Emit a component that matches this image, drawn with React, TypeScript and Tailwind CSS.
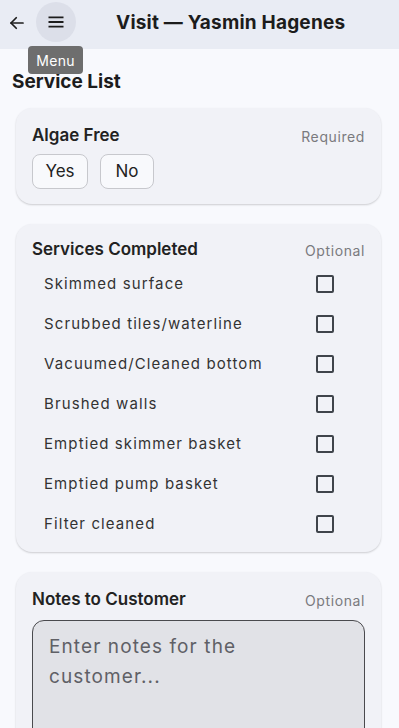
import React from "react";

const items = [
  "Skimmed surface",
  "Scrubbed tiles/waterline",
  "Vacuumed/Cleaned bottom",
  "Brushed walls",
  "Emptied skimmer basket",
  "Emptied pump basket",
  "Filter cleaned",
];

export default function App() {
  return (
    <div
      className="w-[399px] h-[728px] overflow-hidden bg-[#f8f9fd] text-[#1f1f1f]"
      style={{ fontFamily: "Inter, 'Noto Sans', sans-serif" }}
    >
      <header className="relative h-[49px] bg-[#e9ecf4] flex items-center">
        <button className="ml-[7px] w-[20px] h-[40px] flex items-center justify-center mt-[-4px]">
          <svg width="18" height="18" viewBox="0 0 24 24" fill="none" stroke="#1c1c1c" strokeWidth="2.3" strokeLinecap="round" strokeLinejoin="round">
            <path d="M20 12H4" />
            <path d="M11 5l-7 7 7 7" />
          </svg>
        </button>
        <button className="ml-[9px] w-[40px] h-[40px] rounded-full bg-[#dcdfe9] flex items-center justify-center mt-[-5px]">
          <svg width="20" height="20" viewBox="0 0 24 24" fill="none" stroke="#1c1c1c" strokeWidth="2.2" strokeLinecap="butt">
            <path d="M3 6.5h18M3 12h18M3 17.5h18" />
          </svg>
        </button>
        <h1 className="ml-[40px] text-[19px] font-bold tracking-[0.2px] mt-[-3px] text-[#1c1c1c]">
          Visit — Yasmin Hagenes
        </h1>
        <div className="absolute left-[28px] top-[46px] w-[55px] h-[28px] rounded-[4px] bg-[#6e6e6e] text-white text-[14px] tracking-[0.3px] flex items-center justify-center z-10">
          Menu
        </div>
      </header>

      <div className="px-3 pt-[21px] text-[19px] font-bold leading-[24px] text-[#1c1c1c]">Service List</div>

      <div className="mt-[14px] flex flex-col gap-5 pl-4 pr-[18px]">
        <section className="rounded-[16px] bg-[#f1f2f7] shadow-[0_1px_2px_rgba(0,0,0,0.18)] px-4 pt-[18px] pb-[15px]">
          <div className="flex items-center justify-between h-5">
            <span className="text-[17px] font-semibold text-[#222]">Algae Free</span>
            <span className="text-[14px] tracking-[0.6px] text-[#7a7a7e]">Required</span>
          </div>
          <div className="mt-[8px] flex gap-3">
            <button className="w-[56px] h-[35px] rounded-lg border border-[#c7c8cd] bg-[#f8f9fc] text-[17px] text-[#222]">Yes</button>
            <button className="w-[54px] h-[35px] rounded-lg border border-[#c7c8cd] bg-[#f8f9fc] text-[17px] text-[#222]">No</button>
          </div>
        </section>

        <section className="rounded-[16px] bg-[#f1f2f7] shadow-[0_1px_2px_rgba(0,0,0,0.18)] px-4 pt-4 pb-2">
          <div className="flex items-center justify-between h-5">
            <span className="text-[17px] font-semibold text-[#222]">Services Completed</span>
            <span className="text-[14px] tracking-[0.6px] text-[#7a7a7e]">Optional</span>
          </div>
          <ul className="mt-[4px]">
            {items.map((t) => (
              <li key={t} className="h-10 flex items-center justify-between pl-3 pr-[31px]">
                <span className="text-[15px] tracking-[1.1px] text-[#333]">{t}</span>
                <span className="w-[18px] h-[18px] border-2 border-[#3f444b] rounded-[2px]" />
              </li>
            ))}
          </ul>
        </section>

        <section className="rounded-[16px] bg-[#f1f2f7] shadow-[0_1px_2px_rgba(0,0,0,0.18)] px-4 pt-[18px] pb-4">
          <div className="flex items-center justify-between h-5">
            <span className="text-[17px] font-semibold text-[#222]">Notes to Customer</span>
            <span className="text-[14px] tracking-[0.6px] text-[#7a7a7e]">Optional</span>
          </div>
          <div className="mt-[10px] h-[130px] rounded-xl border border-[#4a4a4e] bg-[#e1e2e7] px-4 pt-[11px]">
            <div className="text-[19px] leading-[30px] tracking-[1.1px] text-[#5f6066] w-[240px]">
              Enter notes for the customer...
            </div>
          </div>
        </section>
      </div>
    </div>
  );
}
